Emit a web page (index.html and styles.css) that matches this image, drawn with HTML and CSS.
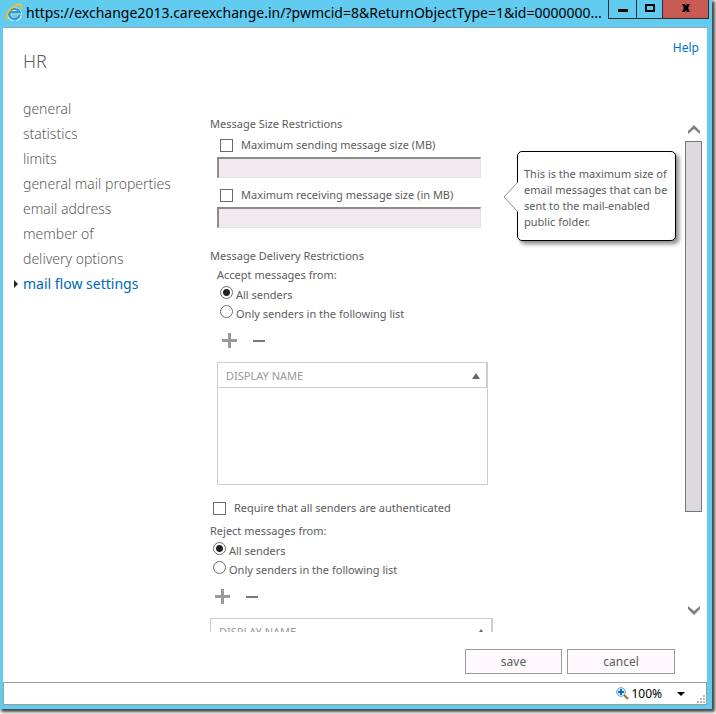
FILE: index.html
```html
<!DOCTYPE html>
<html lang="en">
<head>
<meta charset="utf-8">
<title>HR - mail flow settings</title>
<link rel="stylesheet" href="styles.css">
</head>
<body>
<div class="window">
  <header class="titlebar">
    <svg class="ie-logo" viewBox="0 0 18 18" aria-hidden="true">
      <path d="M14.800 12.200A5.300 5.300 0 1 1 14.500 9.200H5" fill="none" stroke="#d8f1fb" stroke-width="4"/>
      <path d="M14.600 12A5.300 5.300 0 1 1 14.500 9.200H5" fill="none" stroke="#3a96cc" stroke-width="2.600"/>
      <path d="M4.400 8a5 5 0 0 1 8-2.400" fill="none" stroke="#9ad8f4" stroke-width="1"/>
      <path d="M3 16.400C.2 15.400 1.200 10.800 5.400 6.200C9.400 2 14.400.4 16 2c.8.9.5 2.400-.2 3.800" fill="none" stroke="#f5bd25" stroke-width="1.800"/>
    </svg>
    <h1 class="address">https://exchange2013.careexchange.in/?pwmcid=8&amp;ReturnObjectType=1&amp;id=0000000...</h1>
    <div class="window-buttons">
      <button class="win-btn" type="button" aria-label="Minimize"><svg viewBox="0 0 12 12"><path d="M1 7h10v3H1z"/></svg></button>
      <button class="win-btn win-max" type="button" aria-label="Maximize"><svg viewBox="0 0 12 12"><path d="M1 2h10v8H1zM3 4v4h6V4z" fill-rule="evenodd"/></svg></button>
      <button class="win-btn win-close" type="button" aria-label="Close"><svg viewBox="0 0 12 12"><path d="M2 2h3l1 2 1-2h3L8 6l2 4H7L6 8l-1 2H2l2-4z"/></svg></button>
    </div>
  </header>

  <div class="page">
    <div class="page-head">
      <h2 class="title">HR</h2>
      <a class="help" href="#help">Help</a>
    </div>

    <div class="body">
      <nav class="nav">
        <a href="#general">general</a>
        <a href="#statistics">statistics</a>
        <a href="#limits">limits</a>
        <a href="#properties">general mail properties</a>
        <a href="#email">email address</a>
        <a href="#member">member of</a>
        <a href="#delivery">delivery options</a>
        <a class="current" href="#flow" aria-current="page">mail flow settings</a>
      </nav>

      <form class="form" id="flow-form">
        <h3 class="section">Message Size Restrictions</h3>
        <div class="indent size-group">
          <label class="check"><input type="checkbox"><span>Maximum sending message size (MB)</span></label>
          <input class="text" type="text" aria-label="Maximum sending message size" disabled>
        </div>
        <div class="indent size-group">
          <label class="check"><input type="checkbox"><span>Maximum receiving message size (in MB)</span></label>
          <input class="text" type="text" aria-label="Maximum receiving message size" disabled>
        </div>

        <h3 class="section delivery">Message Delivery Restrictions</h3>
        <div class="indent">
          <p class="prompt">Accept messages from:</p>
          <label class="radio"><input type="radio" name="accept" checked><span>All senders</span></label>
          <label class="radio"><input type="radio" name="accept"><span>Only senders in the following list</span></label>
          <div class="tools">
            <button type="button" aria-label="Add"><svg viewBox="0 0 15 15"><path d="M6 0h3v6h6v3H9v6H6V9H0V6h6z" fill="#9a9a9a"/></svg></button>
            <button type="button" aria-label="Remove"><svg viewBox="0 0 15 15"><path d="M1 7h12v2H1z" fill="#777"/></svg></button>
          </div>
          <div class="list">
            <table>
              <thead><tr><th><span>DISPLAY NAME</span><svg class="sort" viewBox="0 0 8 6"><path d="M4 0l4 6H0z"/></svg></th></tr></thead>
            </table>
          </div>
        </div>

        <label class="check require"><input type="checkbox"><span>Require that all senders are authenticated</span></label>
        <p class="prompt">Reject messages from:</p>
        <label class="radio"><input type="radio" name="reject" checked><span>All senders</span></label>
        <label class="radio"><input type="radio" name="reject"><span>Only senders in the following list</span></label>
        <div class="tools">
          <button type="button" aria-label="Add"><svg viewBox="0 0 15 15"><path d="M6 0h3v6h6v3H9v6H6V9H0V6h6z" fill="#9a9a9a"/></svg></button>
          <button type="button" aria-label="Remove"><svg viewBox="0 0 15 15"><path d="M1 7h12v2H1z" fill="#777"/></svg></button>
        </div>
        <div class="list wide">
          <table>
            <thead><tr><th><span>DISPLAY NAME</span><svg class="sort" viewBox="0 0 8 6"><path d="M4 0l4 6H0z"/></svg></th></tr></thead>
          </table>
        </div>
      </form>

      <aside class="callout" role="tooltip">
        <svg class="pointer" viewBox="0 0 15 30"><path d="M15 0L1 15l14 15z" fill="#fff"/><path d="M14 1L1 15l13 14" fill="none" stroke="#8a8a8a"/></svg>
        This is the maximum size of<br>email messages that can be<br>sent to the mail-enabled<br>public folder.
      </aside>

      <div class="scrollbar" aria-hidden="true">
        <svg class="arrow" viewBox="0 0 12 9"><path d="M6 0l6 6v3L6 4 0 9V6z"/></svg>
        <div class="track"><div class="thumb"></div></div>
        <svg class="arrow" viewBox="0 0 12 9"><path d="M6 9L0 3V0l6 5 6-5v3z"/></svg>
      </div>
    </div>

    <div class="actions">
      <button class="save" type="submit" form="flow-form">save</button>
      <button class="cancel" type="button">cancel</button>
    </div>
  </div>

  <footer class="status">
    <button class="zoom" type="button">
      <svg class="lens" viewBox="0 0 13 13"><path d="M8 8l4 4" stroke="#a87848" stroke-width="2.400"/><circle cx="5" cy="5" r="4.300" fill="#d8f0ff" stroke="#7899bd"/><path d="M4 2h2v2h2v2H6v2H4V6H2V4h2z" fill="#0870c8"/></svg>
      <span>100%</span>
      <svg class="drop" viewBox="0 0 8 4"><path d="M0 0h8L4 4z"/></svg>
    </button>
    <svg class="grip" viewBox="0 0 8 8"><path d="M6 0h2v2H6zM3 3h2v2H3zM6 3h2v2H6zM0 6h2v2H0zM3 6h2v2H3zM6 6h2v2H6z" fill="#b8b8b8"/></svg>
  </footer>
</div>
</body>
</html>
```
FILE: styles.css
```css
* { box-sizing: border-box; }

body {
  margin: 0;
  height: 100vh;
  padding: 0 4px 5px 0;
  background: #fff;
  color: #5c5c5c;
  font: 12px/16px "Noto Sans", "Open Sans", sans-serif;
  overflow: hidden;
}

h1, h2, h3, p { margin: 0; font-weight: 400; }
button, input { font: inherit; color: inherit; }
svg { display: block; flex: none; }

.window {
  height: 100%;
  display: flex;
  flex-direction: column;
  padding: 0 5px 4px 3px;
  background: #62cbf0;
  box-shadow: 2px 2px 3px 1px #444;
}

/* title bar */
.titlebar {
  display: flex;
  align-items: flex-start;
  height: 27px;
  padding-left: 2px;
  color: #000;
}
.ie-logo { width: 18px; height: 18px; margin-top: 3px; }
.address {
  flex: 1;
  min-width: 0;
  margin-left: 3px;
  font-size: 14px;
  line-height: 26px;
  white-space: nowrap;
  overflow: hidden;
  text-overflow: ellipsis;
}
.window-buttons { display: flex; margin: 0 -2px 0 1px; }
.win-btn {
  display: flex;
  justify-content: center;
  width: 29px;
  height: 19px;
  padding: 2px 0 0;
  margin-right: -1px;
  border: 1px solid #2f2f2f;
  border-top: 0;
  background: #62cbf0;
}
.win-btn svg { width: 12px; height: 12px; }
.win-max { width: 27px; }
.win-close { width: 47px; margin-right: 0; background: #c75b54; }

/* page */
.page {
  flex: 1;
  min-height: 0;
  display: flex;
  flex-direction: column;
  border-top: 1px solid #9aa9b0;
  background: #fff;
}
.page-head {
  display: flex;
  justify-content: space-between;
  height: 68px;
  padding: 12px 8px 0 20px;
}
.title { font-size: 18px; line-height: 42px; font-weight: 300; }
.help { color: #0072c6; text-decoration: none; }

.body {
  position: relative;
  flex: 1;
  min-height: 0;
  display: flex;
  padding-right: 5px;
}
.nav {
  display: flex;
  flex-direction: column;
  width: 207px;
  padding-left: 20px;
}
.nav a {
  color: #5c5c5c;
  font-size: 14px;
  line-height: 25px;
  font-weight: 300;
  text-decoration: none;
}
.nav .current { display: flex; align-items: center; color: #0067b8; font-weight: 400; }
.nav .current::before {
  content: "";
  margin-left: -9px;
  margin-right: 5px;
  border: 4px solid transparent;
  border-left-color: #222;
  border-right: 0;
}

/* form */
.form { flex: 1; margin-top: 19px; overflow: hidden; font-size: 11px; }
.section { font-size: 11px; line-height: 18px; }
.delivery { margin-top: 19px; }
.indent { padding-left: 7px; }
.size-group + .size-group { margin-top: 5px; }
.check, .radio { display: flex; padding-left: 3px; }
.check { height: 24px; align-items: center; gap: 8px; }
.radio { height: 19px; align-items: flex-start; gap: 3px; line-height: 20px; }
.check input, .radio input {
  appearance: none;
  flex: none;
  width: 13px;
  height: 13px;
  margin: 0;
  border: 1px solid #6b6b6b;
  background: #fff;
}
.radio input { margin-top: 1px; border-radius: 50%; }
.radio input:checked { background: radial-gradient(circle, #222 3px, #fff 4px); }
.text {
  display: block;
  width: 264px;
  height: 21px;
  padding: 0 4px;
  border: 1px solid #e3e3e3;
  border-top: 2px solid #8c8a8c;
  border-left: 2px solid #8c8a8c;
  background: #efeaee;
}
.prompt { line-height: 20px; }
.tools { display: flex; align-items: center; gap: 15px; height: 39px; padding: 0 0 4px 5px; }
.tools button { padding: 0; border: 0; background: none; }
.tools svg { width: 15px; height: 15px; }

.list { width: 271px; height: 123px; border: 1px solid #c8cfcf; }
.list table { width: 100%; border-collapse: collapse; }
.list th {
  display: flex;
  align-items: center;
  justify-content: space-between;
  height: 25px;
  padding: 2px 6px 0 8px;
  border-right: 1px solid #c8cfcf;
  border-bottom: 1px solid #c8cfcf;
  color: #999;
  font-size: 11px;
  font-weight: 400;
}
.sort { width: 8px; height: 6px; fill: #666; }
.wide { width: 283px; }
.require { margin: 11px 0 1px; }

/* help bubble */
.callout {
  position: absolute;
  top: 55px;
  right: 31px;
  width: 159px;
  height: 90px;
  padding: 14px 0 0 6px;
  border: 1px solid #000;
  border-radius: 5px;
  background: #fff;
  box-shadow: 3px 3px 4px #888;
  font-size: 11px;
  white-space: nowrap;
}
.pointer { position: absolute; left: -15px; top: 30px; width: 15px; height: 30px; }

/* scroll bar */
.scrollbar {
  display: flex;
  flex-direction: column;
  align-items: center;
  width: 17px;
  padding: 29px 0 17px;
}
.arrow { width: 12px; height: 9px; fill: #808080; }
.track { flex: 1; width: 17px; margin: 7px 0; }
.thumb { height: 81%; border: 1px solid #777; background: #dcdadc; }

/* footer */
.actions {
  display: flex;
  justify-content: flex-end;
  gap: 5px;
  padding: 17px 32px 8px 0;
}
.actions button {
  height: 25px;
  padding: 0;
  border: 1px solid #9a9da0;
  background: #fdf9fd;
}
.actions .save { width: 97px; }
.actions .cancel { width: 108px; }

.status {
  display: flex;
  align-items: center;
  justify-content: flex-end;
  height: 23px;
  border: 1px solid #9c9c9c;
  background: #fff;
  color: #000;
}
.zoom { display: flex; align-items: center; padding: 0; border: 0; background: none; }
.lens { width: 13px; height: 13px; margin-right: 2px; }
.drop { width: 8px; height: 4px; margin: 0 12px 0 15px; }
.grip { align-self: flex-end; width: 8px; height: 8px; margin: 0 1px 1px 0; }
```
